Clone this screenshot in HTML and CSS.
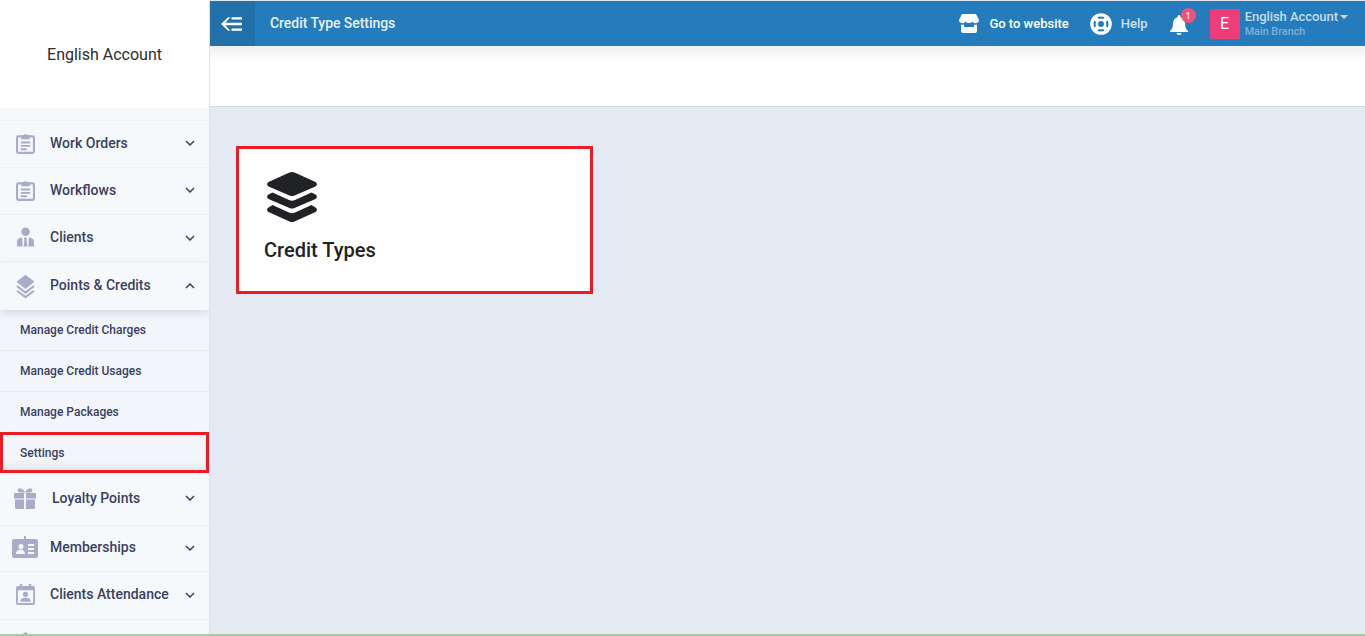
FILE: index.html
```html
<!DOCTYPE html>
<html lang="en">
<head>
<meta charset="utf-8">
<title>Credit Type Settings</title>
<link rel="stylesheet" href="styles.css">
</head>
<body>
<div class="app">
  <aside class="sidebar">
    <div class="brand">English Account</div>
    <nav class="menu">
      <div class="menu-spacer"></div>
      <a class="item h47"><svg class="ic" viewBox="0 0 20 22"><path fill="none" stroke="#a8acca" stroke-width="2.200" d="M6 3.500H2.500a1.400 1.400 0 0 0-1.400 1.400v14.600a1.400 1.400 0 0 0 1.400 1.400h15a1.400 1.400 0 0 0 1.400-1.400V4.900a1.400 1.400 0 0 0-1.400-1.400H14"/><path fill="#a8acca" d="M5.500 2h3a1.600 1.600 0 0 1 3 0h3v4.500h-9zM5 9h10v2H5zM5 12.500h10v2H5zM5 16h6.500v2H5z"/></svg><span class="label">Work Orders</span><svg class="chev" viewBox="0 0 10 6"><path d="M1 1l4 4 4-4"/></svg></a>
      <a class="item h47"><svg class="ic" viewBox="0 0 20 22"><path fill="none" stroke="#a8acca" stroke-width="2.200" d="M6 3.500H2.500a1.400 1.400 0 0 0-1.400 1.400v14.600a1.400 1.400 0 0 0 1.400 1.400h15a1.400 1.400 0 0 0 1.400-1.400V4.900a1.400 1.400 0 0 0-1.400-1.400H14"/><path fill="#a8acca" d="M5.500 2h3a1.600 1.600 0 0 1 3 0h3v4.500h-9zM5 9h10v2H5zM5 12.500h10v2H5zM5 16h6.500v2H5z"/></svg><span class="label">Workflows</span><svg class="chev" viewBox="0 0 10 6"><path d="M1 1l4 4 4-4"/></svg></a>
      <a class="item h48"><svg class="ic" viewBox="0 0 20 22"><circle cx="10" cy="5" r="4.500" fill="#a8acca"/><path fill="#a8acca" d="M1 20.500v-5c0-2.500 1.500-4 4-4.300h1.500l.5 9.300zM19 20.500v-5c0-2.500-1.500-4-4-4.300h-1.500l-.5 9.300zM8.200 11h3.600l-.7 2 .9 7.500H8l.9-7.500z"/></svg><span class="label">Clients</span><svg class="chev" viewBox="0 0 10 6"><path d="M1 1l4 4 4-4"/></svg></a>
      <a class="item h48 open"><svg class="ic tall" viewBox="0 0 20 25"><path fill="#a8acca" d="M10 0l9.500 7.500L10 15 .5 7.500z"/><path fill="none" stroke="#a8acca" stroke-width="2.200" d="M1 12l9 7 9-7M1 17l9 6.700 9-6.700"/></svg><span class="label">Points &amp; Credits</span><svg class="chev" viewBox="0 0 10 6"><path d="M1 5l4-4 4 4"/></svg></a>
      <div class="submenu">
        <a class="sub">Manage Credit Charges</a>
        <a class="sub">Manage Credit Usages</a>
        <a class="sub">Manage Packages</a>
        <a class="sub marked">Settings</a>
      </div>
      <a class="item h52"><svg class="ic wide" viewBox="0 0 24 21"><path fill="#a8acca" d="M1 5h10v5.500H1zM13 5h10v5.500H13zM2 11.500h9V21H3.500A1.500 1.500 0 0 1 2 19.500zM13 11.500h9v8a1.500 1.500 0 0 1-1.500 1.500H13zM11 4.500H6.500C3.500 4 4.500 0 7 .3c2 .2 4 2 5 3.700 1-1.700 3-3.500 5-3.700 2.500-.3 3.500 3.700.5 4.200H13z"/></svg><span class="label shifted">Loyalty Points</span><svg class="chev" viewBox="0 0 10 6"><path d="M1 1l4 4 4-4"/></svg></a>
      <a class="item h46"><svg class="ic badge" viewBox="0 0 26 22"><path fill="#a8acca" fill-rule="evenodd" d="M2 3h10V0h2v3h10a2 2 0 0 1 2 2v15a2 2 0 0 1-2 2H2a2 2 0 0 1-2-2V5a2 2 0 0 1 2-2zM9 8a2.500 2.500 0 1 0 0 5 2.500 2.500 0 0 0 0-5zM4 18h9c0-3-2-4.500-4.500-4.500S4 15 4 18zM16 8v2h6V8zM16 12v2h6v-2zM16 16v2h6v-2z"/></svg><span class="label">Memberships</span><svg class="chev" viewBox="0 0 10 6"><path d="M1 1l4 4 4-4"/></svg></a>
      <a class="item h48"><svg class="ic" viewBox="0 0 20 22"><path fill="#a8acca" fill-rule="evenodd" d="M4 0h2.500v2h7V0H16v2h2a2 2 0 0 1 2 2v16a2 2 0 0 1-2 2H2a2 2 0 0 1-2-2V4a2 2 0 0 1 2-2h2zM2 6.500V20h16V6.500zM10 8a2.800 2.800 0 1 1 0 5.600A2.800 2.800 0 0 1 10 8zM4.500 18.500c0-3 2.500-4 5.500-4s5.500 1 5.500 4z"/></svg><span class="label">Clients Attendance</span><svg class="chev" viewBox="0 0 10 6"><path d="M1 1l4 4 4-4"/></svg></a>
      <a class="item h48"><svg class="ic" viewBox="0 0 20 22"><path fill="#a8acca" d="M10 0l9.500 7.500L10 15 .5 7.500z"/></svg></a>
    </nav>
  </aside>
  <main class="main">
    <header class="topbar">
      <button class="back" type="button" aria-label="Back"><svg viewBox="0 0 22 14" width="21" height="14"><path fill="#fff" d="M7.500 0L9.800 0 4.500 5.800H22v2.400H4.500L9.800 14H7.500L0 7zM11 0h11v2.400H11zM11 11.600h11V14H11z"/></svg></button>
      <h1 class="title">Credit Type Settings</h1>
      <div class="actions">
        <a class="action strong"><svg class="action-ic" viewBox="0 0 20 19" width="20" height="19"><path fill="#fff" d="M3 0h14l3 6a3 3 0 0 1-3 3 3 3 0 0 1-3.500-1.500A3.500 3.500 0 0 1 10 9a3.500 3.500 0 0 1-3.500-1.500A3 3 0 0 1 3 9 3 3 0 0 1 0 6zM2 10.500c1 .3 2 .3 3 0V13h10v-2.500c1 .3 2 .3 3 0V17a2 2 0 0 1-2 2H4a2 2 0 0 1-2-2z"/></svg>Go to website</a>
        <a class="action help"><svg class="action-ic" viewBox="0 0 22 22" width="22" height="22"><g fill="none" stroke="#fff"><circle cx="11" cy="11" r="9.200" stroke-width="3.200"/><circle cx="11" cy="11" r="4.200" stroke-width="2.400"/><path stroke-width="4.200" d="M4.500 4.500l3.500 3.500M17.500 4.500L14 8M4.500 17.500L8 14M17.500 17.500L14 14"/></g></svg>Help</a>
        <a class="bell"><svg viewBox="0 0 18 20" width="18" height="20"><path fill="#fff" d="M9 0a1.500 1.500 0 0 1 1.500 1.500v.700C13.500 3 15 5.500 15 8.500c0 4 1 5.500 3 7.500v1H0v-1c2-2 3-3.500 3-7.500C3 5.500 4.500 3 7.500 2.200v-.700A1.500 1.500 0 0 1 9 0zM6.500 18h5a2.500 2 0 0 1-5 0z"/></svg><span class="count">1</span></a>
        <div class="account">
          <span class="avatar">E</span>
          <div class="who">
            <div class="who-name">English Account<i class="caret"></i></div>
            <div class="who-branch">Main Branch</div>
          </div>
        </div>
      </div>
    </header>
    <div class="pagehead"></div>
    <section class="content">
      <a class="card">
        <svg class="card-ic" viewBox="0 0 50 50" width="50" height="50"><path fill="#212226" d="M22.500 .6a6 6 0 0 1 5 0L48.500 10a2.500 2.500 0 0 1 0 4.500L27.500 23.500a6 6 0 0 1-5 0L1.500 14.500a2.500 2.500 0 0 1 0-4.500zM5.500 20.500L22 28a7 7 0 0 0 6 0L44.500 20.500l4 2a2.500 2.500 0 0 1 0 4.500L27.500 36a6 6 0 0 1-5 0L1.500 27a2.500 2.500 0 0 1 0-4.500zM5.500 33L22 40.500a7 7 0 0 0 6 0L44.500 33l4 2.500a2.500 2.500 0 0 1 0 4.500L27.500 49.400a6 6 0 0 1-5 0L1.500 40a2.500 2.500 0 0 1 0-4.500z"/></svg>
        <span class="card-title">Credit Types</span>
      </a>
    </section>
  </main>
</div>
<div class="footer-line"></div>
</body>
</html>
```
FILE: styles.css
```css
* { box-sizing: border-box; }
html, body { margin: 0; height: 100%; overflow: hidden; }
body { font-family: Roboto, "Liberation Sans", sans-serif; background: #e4eaf3; color: #212226; }
a { text-decoration: none; color: inherit; }

.app { display: flex; height: 636px; }
.sidebar { width: 210px; flex: none; background: #f6f9fc; border-right: 1px solid #dfe3e9; overflow: hidden; }
.brand { height: 108px; background: #fff; display: flex; align-items: center; justify-content: center; font-size: 16px; color: #2c2d33; padding-top: 1px; }
.menu { display: flex; flex-direction: column; }
.menu-spacer { height: 12px; }

.item { position: relative; display: flex; align-items: center; flex: none; padding: 0 0 3px 16px; border-top: 1px solid #edf0f5; font-size: 14px; font-weight: 500; color: #3b3f63; }
.h46 { height: 46px; }
.h47 { height: 47px; padding-bottom: 2px; }
.h48 { height: 48px; }
.h52 { height: 52px; padding-bottom: 2px; border-top: none; }
.ic { width: 19px; height: 21px; flex: none; }
.ic.tall { height: 25px; margin-top: 2px; }
.ic.wide { width: 24px; height: 21px; margin-left: -3px; }
.ic.badge { width: 26px; height: 22px; margin-left: -4px; margin-right: -3px; }
.label { margin-left: 15px; }
.label.shifted { margin-left: 15px; }
.chev { position: absolute; right: 14px; top: 50%; width: 10px; height: 6px; margin-top: -4px; fill: none; stroke: #3b3f63; stroke-width: 1.500; }
.open { box-shadow: 0 3px 8px rgba(60, 70, 100, .16); z-index: 1; }

.submenu { display: flex; flex-direction: column; background: #f2f5f9; }
.sub { height: 41px; flex: none; display: flex; align-items: center; padding-left: 20px; font-size: 12px; font-weight: 500; color: #3b3f63; border-bottom: 1px solid #e6eaf0; }
.sub.marked { position: relative; margin-top: -1px; border: 3px solid #ed1c24; padding-left: 17px; box-shadow: inset 0 -8px 8px -6px rgba(60, 70, 100, .12); }

.main { flex: 1; min-width: 0; display: flex; flex-direction: column; }
.topbar { height: 46px; flex: none; background: #247cbc; border-top: 1px solid #dfe8f0; display: flex; align-items: center; color: #fff; }
.back { width: 45px; height: 45px; border: 0; padding: 0 2px 0 0; background: #2170aa; display: flex; align-items: center; justify-content: center; flex: none; }
.title { margin: 0 0 0 15px; padding-bottom: 2px; font-size: 14px; letter-spacing: -.05px; font-weight: 500; color: #e8f1f8; flex: 1; }
.actions { display: flex; align-items: center; }
.action { display: flex; align-items: center; font-size: 13px; font-weight: 500; }
.action-ic { margin-right: 10px; }
.strong { color: #fff; }
.help { margin-left: 21px; color: #cfe1ef; }
.action.help .action-ic { margin-right: 9px; }
.bell { position: relative; display: flex; margin-left: 22px; margin-top: 3px; }
.count { position: absolute; top: -7px; right: -8px; width: 15px; height: 15px; border-radius: 50%; background: #f0527c; color: #fdd; font-size: 9px; font-weight: 700; display: flex; align-items: center; justify-content: center; }
.account { display: flex; align-items: center; margin-left: 22px; margin-right: 17px; }
.avatar { width: 30px; height: 30px; border-radius: 2px; background: #ef3d79; color: #fff; font-size: 16px; display: flex; align-items: center; justify-content: center; }
.who { margin-left: 5px; margin-top: 2px; }
.who-name { font-size: 13px; font-weight: 500; letter-spacing: -.05px; color: #c4dcee; line-height: 14px; display: flex; align-items: center; }
.caret { display: inline-block; margin-left: 2px; border-left: 4px solid transparent; border-right: 4px solid transparent; border-top: 4px solid #c4dcee; }
.who-branch { font-size: 10.800px; font-weight: 500; color: #7fb2d8; line-height: 16px; }

.pagehead { height: 61px; flex: none; background: linear-gradient(#eeeff1, #fff 16px); border-bottom: 1px solid #d5dae3; }
.content { flex: 1; padding: 39px 0 0 26px; }
.card { width: 357px; height: 148px; display: flex; flex-direction: column; align-items: flex-start; background: #fff; border: 3px solid #ed1c24; padding: 23px 25px 0; }
.card-ic { margin-left: 3px; }
.card-title { margin-top: 15px; font-size: 20px; font-weight: 500; color: #212226; line-height: 26px; }

.footer-line { position: absolute; left: 0; right: 0; bottom: 0; height: 2px; background: #a9c9a4; }
```
